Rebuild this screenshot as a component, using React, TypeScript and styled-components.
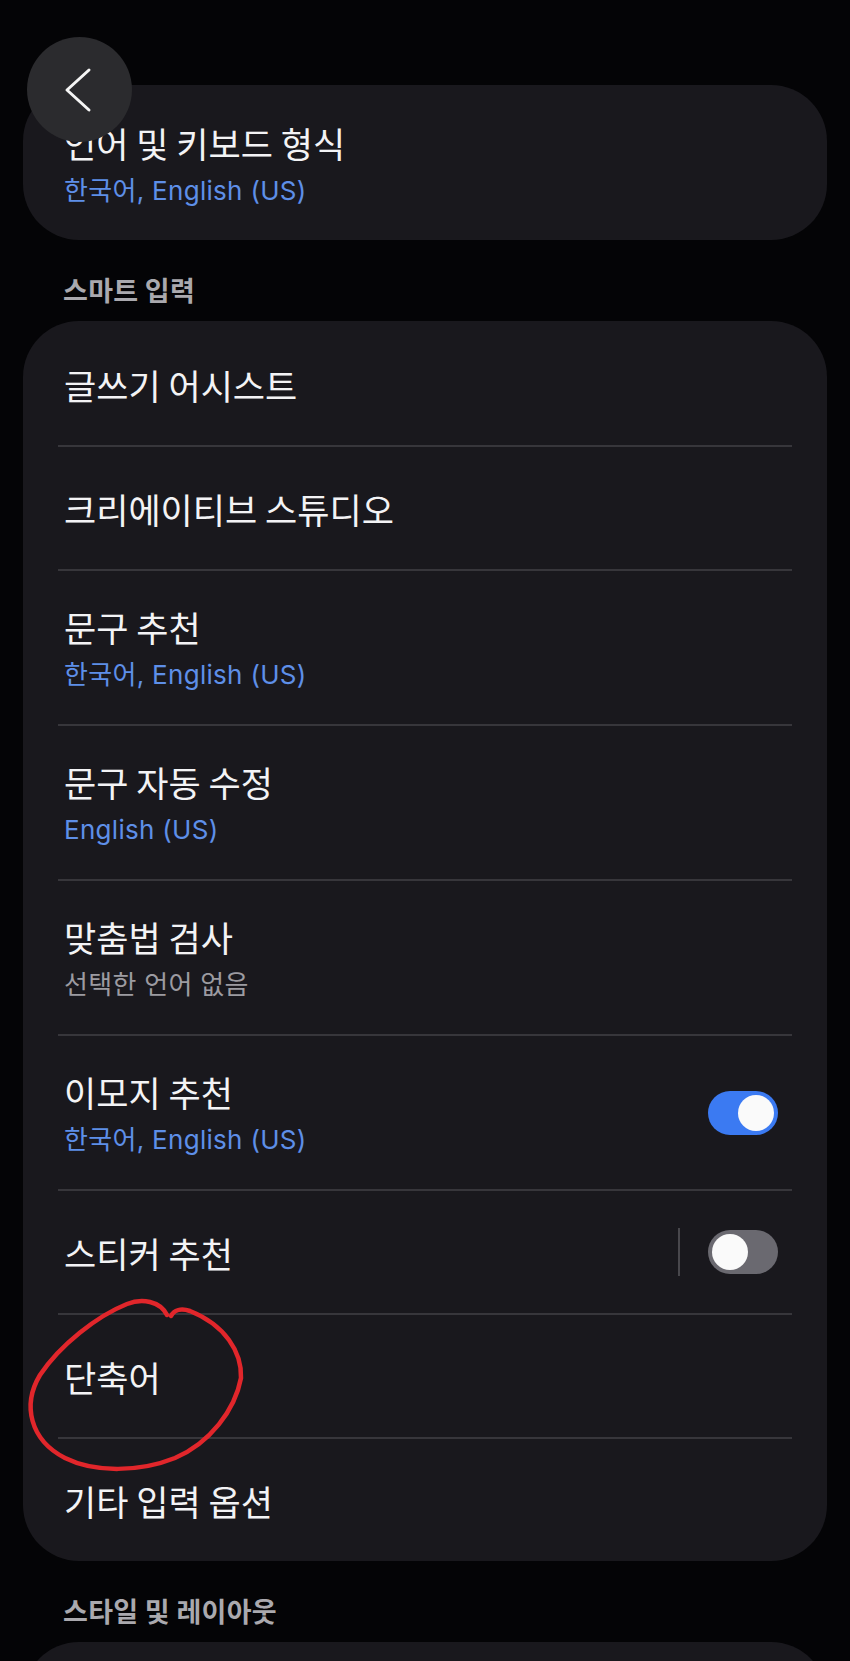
import React from "react";
import styled, { createGlobalStyle } from "styled-components";

const GlobalStyle = createGlobalStyle`
  html, body {
    margin: 0;
    padding: 0;
    background: #040406;
  }
  body {
    font-family: "Noto Sans CJK KR", "Noto Sans", sans-serif;
    -webkit-font-smoothing: antialiased;
  }
`;

const Page = styled.div`
  position: relative;
  padding-top: 85px;
  min-height: 1661px;
  box-sizing: border-box;
  overflow: hidden;
`;

const BackButton = styled.button`
  position: absolute;
  left: 27px;
  top: 37px;
  width: 105px;
  height: 105px;
  border-radius: 50%;
  border: none;
  padding: 0;
  background: #2b2b2e;
  display: flex;
  align-items: center;
  justify-content: center;
  z-index: 2;
`;

const Card = styled.section`
  margin: 0 23px;
  background: #19181d;
  border-radius: 56px;
  padding-top: 2px;
  overflow: hidden;
`;

const Row = styled.div<{ $tall?: boolean }>`
  height: ${(p) => (p.$tall ? 153 : 122)}px;
  box-sizing: border-box;
  padding: 0 49px 0 41px;
  display: flex;
  align-items: center;
  justify-content: space-between;
`;

const TextBlock = styled.div`
  display: flex;
  flex-direction: column;
  padding-top: 2px;
`;

const Title = styled.div`
  font-size: 35px;
  line-height: 44px;
  font-weight: 400;
  color: #f3f3f5;
  white-space: nowrap;
`;

const Subtitle = styled.div<{ $tone: "blue" | "gray" }>`
  margin-top: 8px;
  font-family: Inter, "Noto Sans CJK KR", sans-serif;
  font-size: 26px;
  line-height: 36px;
  letter-spacing: 0.3px;
  color: ${(p) => (p.$tone === "blue" ? "#5e8fe8" : "#9c9ba1")};
  white-space: nowrap;
`;

const Divider = styled.div`
  height: 2px;
  margin: 0 35px;
  background: #37363b;
`;

const SectionHeader = styled.h2`
  margin: 0;
  padding: 33px 63px 14px;
  font-size: 27px;
  line-height: 34px;
  font-weight: 700;
  letter-spacing: 0.3px;
  color: #aaa9ae;
`;

const Trailing = styled.div`
  display: flex;
  align-items: center;
  gap: 28px;
`;

const VDivider = styled.div`
  width: 2px;
  height: 48px;
  background: #48474c;
`;

const Toggle = styled.div<{ $on: boolean }>`
  width: 70px;
  height: 44px;
  border-radius: 22px;
  box-sizing: border-box;
  padding: 0 4px;
  display: flex;
  align-items: center;
  justify-content: ${(p) => (p.$on ? "flex-end" : "flex-start")};
  background: ${(p) => (p.$on ? "#3b7af2" : "#6a6970")};
`;

const Knob = styled.div`
  width: 36px;
  height: 36px;
  border-radius: 50%;
  background: #fafafa;
`;

/* hand-drawn annotation lying over the list */
const Annotation = styled.svg`
  position: absolute;
  left: 15px;
  top: 1295px;
  width: 235px;
  height: 185px;
  pointer-events: none;
  z-index: 3;
`;

type Item = {
  title: string;
  sub?: string;
  tone?: "blue" | "gray";
  toggle?: boolean;
  split?: boolean;
};

const smartItems: Item[] = [
  { title: "글쓰기 어시스트" },
  { title: "크리에이티브 스튜디오" },
  { title: "문구 추천", sub: "한국어, English (US)", tone: "blue" },
  { title: "문구 자동 수정", sub: "English (US)", tone: "blue" },
  { title: "맞춤법 검사", sub: "선택한 언어 없음", tone: "gray" },
  { title: "이모지 추천", sub: "한국어, English (US)", tone: "blue", toggle: true },
  { title: "스티커 추천", toggle: false, split: true },
  { title: "단축어" },
  { title: "기타 입력 옵션" },
];

function SettingRow({ item }: { item: Item }) {
  return (
    <Row $tall={!!item.sub}>
      <TextBlock>
        <Title>{item.title}</Title>
        {item.sub && <Subtitle $tone={item.tone ?? "blue"}>{item.sub}</Subtitle>}
      </TextBlock>
      {item.toggle !== undefined && (
        <Trailing>
          {item.split && <VDivider />}
          <Toggle $on={item.toggle}>
            <Knob />
          </Toggle>
        </Trailing>
      )}
    </Row>
  );
}

function List({ items }: { items: Item[] }) {
  return (
    <Card>
      {items.map((it, i) => (
        <React.Fragment key={it.title}>
          {i > 0 && <Divider />}
          <SettingRow item={it} />
        </React.Fragment>
      ))}
    </Card>
  );
}

export default function App() {
  return (
    <>
      <GlobalStyle />
      <Page>
        <BackButton aria-label="뒤로">
          <svg width="105" height="105" viewBox="0 0 105 105">
            <polyline
              points="62,33 40,53 62,73"
              fill="none"
              stroke="#f5f5f5"
              strokeWidth="3"
              strokeLinecap="round"
              strokeLinejoin="round"
            />
          </svg>
        </BackButton>

        <List items={[{ title: "언어 및 키보드 형식", sub: "한국어, English (US)", tone: "blue" }]} />

        <SectionHeader>스마트 입력</SectionHeader>
        <List items={smartItems} />

        <SectionHeader>스타일 및 레이아웃</SectionHeader>
        <Card>
          <Row />
        </Card>

        <Annotation viewBox="0 0 235 185">
          <path
            d="M 152 20 C 145 6, 127 3, 112 9 C 82 21, 45 50, 25 80 C 7 110, 15 145, 50 163 C 80 178, 125 177, 160 163 C 195 148, 220 115, 226 83 C 227 57, 210 30, 175 16 C 166 13, 159 15, 156 21"
            fill="none"
            stroke="#e1262b"
            strokeWidth="4.5"
            strokeLinecap="round"
            strokeLinejoin="round"
          />
        </Annotation>
      </Page>
    </>
  );
}
